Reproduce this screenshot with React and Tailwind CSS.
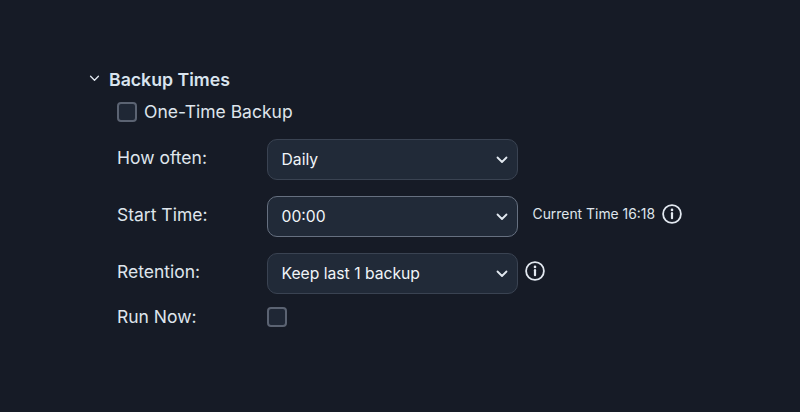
function Chevron({ className, sw = "1.8" }) {
  return (
    <svg className={className} viewBox="0 0 12 8" fill="none" stroke="currentColor" strokeWidth={sw} strokeLinecap="round" strokeLinejoin="round">
      <path d="M1.5 1.5 6 6l4.5-4.5" />
    </svg>
  );
}

function Info() {
  return (
    <svg className="w-[20px] h-[20px] text-[#e2e8f0]" viewBox="0 0 20 20" fill="none" stroke="currentColor" strokeWidth="1.8" strokeLinecap="round">
      <circle cx="10" cy="10" r="8.9" />
      <path d="M10 9.2v5" strokeWidth="2.2" />
      <circle cx="10" cy="5.9" r="1.3" fill="currentColor" stroke="none" />
    </svg>
  );
}

function Select({ value, strong }) {
  return (
    <div className={`w-[251px] h-[41px] rounded-[10px] border bg-[#212a38] flex items-center justify-between pl-[14px] pr-[9px] text-[15.7px] text-[#f1f5f9] ${strong ? "border-[#667080]" : "border-[#3a4352]"}`}>
      <span>{value}</span>
      <Chevron className="w-[12px] h-[8px] text-[#e2e8f0]" />
    </div>
  );
}

function Box({ className = "" }) {
  return <div className={`w-[20px] h-[20px] rounded-[4px] border-2 border-[#5b6372] bg-[#1f2735] ${className}`} />;
}

function Label({ children }) {
  return <div className="w-[149.5px] text-[17.5px] leading-[24px] text-[#dfe5ec] -mt-[3px]">{children}</div>;
}

export default function App() {
  return (
    <div className="w-[800px] h-[412px] bg-[#161b26] overflow-hidden pt-[68px] pl-[88px] font-['Inter',sans-serif]">
      <div className="flex items-center h-[24px]">
        <Chevron className="w-[11px] h-[7px] ml-[1px] text-[#e2e8f0] -mt-[4px]" sw="1.5" />
        <span className="ml-[9px] text-[17.7px] leading-[24px] font-semibold text-[#d9e4ee]">Backup Times</span>
      </div>
      <div className="pl-[29px]">
        <div className="flex items-center h-[24px] mt-[8px]">
          <Box />
          <span className="ml-[7px] text-[17.5px] leading-[24px] text-[#dfe5ec]">One-Time Backup</span>
        </div>
        <div className="flex items-center mt-[15px]">
          <Label>How often:</Label>
          <Select value="Daily" />
        </div>
        <div className="flex items-center mt-[16px]">
          <Label>Start Time:</Label>
          <Select value="00:00" strong />
          <span className="ml-[15px] text-[13.9px] text-[#dfe5ec] -mt-[5px]">Current Time 16:18</span>
          <span className="ml-[7px] -mt-[5px]"><Info /></span>
        </div>
        <div className="flex items-center mt-[16px]">
          <Label>Retention:</Label>
          <Select value="Keep last 1 backup" />
          <span className="ml-[7px] -mt-[5px]"><Info /></span>
        </div>
        <div className="flex items-center mt-[12px] h-[24px]">
          <Label>Run Now:</Label>
          <Box className="-mt-[2px]" />
        </div>
      </div>
    </div>
  );
}
